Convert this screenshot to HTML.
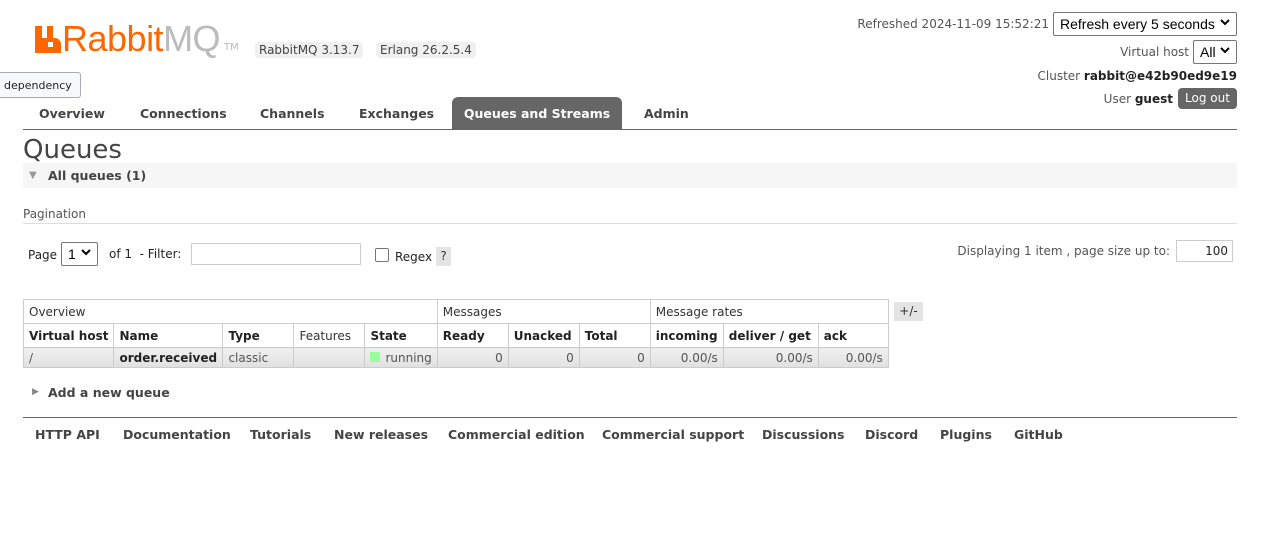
<!DOCTYPE html>
<html><head><style>
body{margin:0;width:1265px;height:546px;background:#fff;font-family:"DejaVu Sans","Liberation Sans",sans-serif;font-size:12px;color:#484848;position:relative;overflow:hidden}
.a{position:absolute;white-space:nowrap}
b{color:#222}
.nav{font-weight:bold;font-size:12.5px;color:#444}
table{border-collapse:collapse;position:absolute;left:23px;top:299px;font-size:12px}
td,th{border:1px solid #ccc;padding:0 5px;text-align:left;height:23px;white-space:nowrap}
th{font-weight:bold;color:#222}
.h td{font-weight:normal;color:#333}
.r td{background:linear-gradient(#f0f0f0,#e0e0e0);height:19px;text-align:right;color:#555}
.sel{border:1px solid #767676;border-radius:2px;background:#fff;font-family:"Liberation Sans",sans-serif;font-size:14px;color:#000;box-sizing:border-box}
.chev{position:absolute;right:6px;top:6px}
.foot{font-weight:bold;font-size:12.5px;color:#444}
</style></head><body>
<svg width="0" height="0" style="position:absolute"><defs><symbol id="cv" viewBox="0 0 10 7"><path d="M1 1l4 4 4-4" fill="none" stroke="#000" stroke-width="2"/></symbol></defs></svg>
<svg class="a" style="left:35px;top:26px" width="26" height="27" viewBox="0 0 26 27"><path fill="#f60" d="M0 0h7v12h5V0h6v12h2c3 0 6 3 6 6v9H0z"/><rect x="13" y="16" width="5" height="5" fill="#fff"/></svg>
<div class="a" style="left:62px;top:18px;font-family:'Liberation Sans',sans-serif;font-size:36px;color:#f60;letter-spacing:-0.5px">Rabbit<span style="color:#bbb">MQ</span></div>
<div class="a" style="left:224px;top:42px;font-size:10px;color:#bbb">TM</div>
<div class="a" style="left:255px;top:42px;background:#f0f0f0;border-radius:4px;padding:1px 4px;font-size:12px;color:#444">RabbitMQ 3.13.7</div>
<div class="a" style="left:376px;top:42px;background:#f0f0f0;border-radius:4px;padding:1px 4px;font-size:12px;color:#444">Erlang 26.2.5.4</div>
<div class="a" style="left:-2px;top:72px;height:26px;border:1px solid #aab;border-radius:3px;background:#f6f8fc;font-size:11px;line-height:26px;padding-left:5px;box-sizing:border-box;width:83px;color:#222">dependency</div>

<div class="a" style="right:216px;top:17px;color:#555">Refreshed 2024-11-09 15:52:21</div>
<div class="a sel" style="left:1053px;top:12px;width:184px;height:24px;padding:3px 6px">Refresh every 5 seconds<svg class="chev" width="10" height="7"><use href="#cv"/></svg></div>
<div class="a" style="right:76px;top:45px;color:#555">Virtual host</div>
<div class="a sel" style="left:1193px;top:40px;width:44px;height:24px;padding:3px 6px">All<svg class="chev" width="10" height="7"><use href="#cv"/></svg></div>
<div class="a" style="right:28px;top:69px;color:#555">Cluster <b>rabbit@e42b90ed9e19</b></div>
<div class="a" style="right:92px;top:92px;color:#555">User <b>guest</b></div>
<div class="a" style="left:1178px;top:88px;width:59px;height:21px;background:#666;border-radius:4px;color:#fff;font-size:12px;text-align:center;line-height:21px">Log out</div>

<div class="a nav" style="left:39px;top:106px">Overview</div>
<div class="a nav" style="left:140px;top:106px">Connections</div>
<div class="a nav" style="left:260px;top:106px">Channels</div>
<div class="a nav" style="left:359px;top:106px">Exchanges</div>
<div class="a nav" style="left:452px;top:97px;width:170px;height:32px;background:#666;border-radius:6px 6px 0 0;color:#fff;text-align:center;line-height:33px">Queues and Streams</div>
<div class="a nav" style="left:644px;top:106px">Admin</div>
<div class="a" style="left:23px;top:129px;width:1214px;height:1px;background:#666"></div>

<div class="a" style="left:23px;top:135px;font-size:26px;color:#444">Queues</div>
<div class="a" style="left:23px;top:163px;width:1214px;height:25px;background:#f6f6f6"></div>
<div class="a" style="left:29px;top:170px;font-size:10px;color:#999">&#9660;</div>
<div class="a" style="left:48px;top:168px;font-weight:bold;font-size:12.5px;color:#444">All queues (1)</div>
<div class="a" style="left:23px;top:207px;color:#555">Pagination</div>
<div class="a" style="left:23px;top:223px;width:1214px;height:1px;background:#ddd"></div>
<div class="a" style="left:28px;top:248px;color:#222">Page</div>
<div class="a sel" style="left:61px;top:242px;width:37px;height:24px;padding:3px 6px">1<svg class="chev" width="10" height="7"><use href="#cv"/></svg></div>
<div class="a" style="left:109px;top:247px;color:#222">of 1 &nbsp;- Filter:</div>
<div class="a" style="left:191px;top:243px;width:170px;height:22px;border:1px solid #ccc;box-sizing:border-box"></div>
<div class="a" style="left:375px;top:248px;width:12px;height:12px;border:1px solid #767676;border-radius:2px"></div>
<div class="a" style="left:395px;top:250px;color:#222">Regex</div>
<div class="a" style="left:436px;top:247px;width:15px;height:19px;background:#e4e4e4;text-align:center;line-height:19px;color:#333">?</div>
<div class="a" style="right:95px;top:244px;color:#555">Displaying 1 item , page size up to:</div>
<div class="a" style="left:1176px;top:240px;width:57px;height:22px;border:1px solid #ccc;box-sizing:border-box;text-align:right;padding:3px 4px;font-size:12px;color:#222">100</div>

<table>
<tr class="h"><td colspan="5">Overview</td><td colspan="3">Messages</td><td colspan="3">Message rates</td></tr>
<tr><th style="width:78px">Virtual host</th><th style="width:98px">Name</th><th style="width:60px">Type</th><th style="width:60px;font-weight:normal;color:#333">Features</th><th style="width:60px">State</th><th style="width:60px">Ready</th><th style="width:60px">Unacked</th><th style="width:60px">Total</th><th style="width:62px">incoming</th><th style="width:84px">deliver / get</th><th style="width:59px">ack</th></tr>
<tr class="r"><td style="text-align:left">/</td><td style="text-align:left"><b>order.received</b></td><td style="text-align:left">classic</td><td></td><td style="text-align:left"><span style="display:inline-block;width:10px;height:10px;background:#9f9;margin-right:5px"></span>running</td><td>0</td><td>0</td><td>0</td><td>0.00/s</td><td>0.00/s</td><td>0.00/s</td></tr>
</table>
<div class="a" style="left:894px;top:302px;width:29px;height:19px;background:#e4e4e4;text-align:center;line-height:19px;color:#333">+/-</div>

<div class="a" style="left:32px;top:387px;font-size:9px;color:#888">&#9654;</div>
<div class="a" style="left:48px;top:385px;font-weight:bold;font-size:12.5px;color:#444">Add a new queue</div>
<div class="a" style="left:23px;top:417px;width:1214px;height:1px;background:#666"></div>
<div class="a foot" style="left:35px;top:427px">HTTP API</div>
<div class="a foot" style="left:123px;top:427px">Documentation</div>
<div class="a foot" style="left:250px;top:427px">Tutorials</div>
<div class="a foot" style="left:334px;top:427px">New releases</div>
<div class="a foot" style="left:448px;top:427px">Commercial edition</div>
<div class="a foot" style="left:602px;top:427px">Commercial support</div>
<div class="a foot" style="left:762px;top:427px">Discussions</div>
<div class="a foot" style="left:865px;top:427px">Discord</div>
<div class="a foot" style="left:940px;top:427px">Plugins</div>
<div class="a foot" style="left:1014px;top:427px">GitHub</div>
</body></html>
